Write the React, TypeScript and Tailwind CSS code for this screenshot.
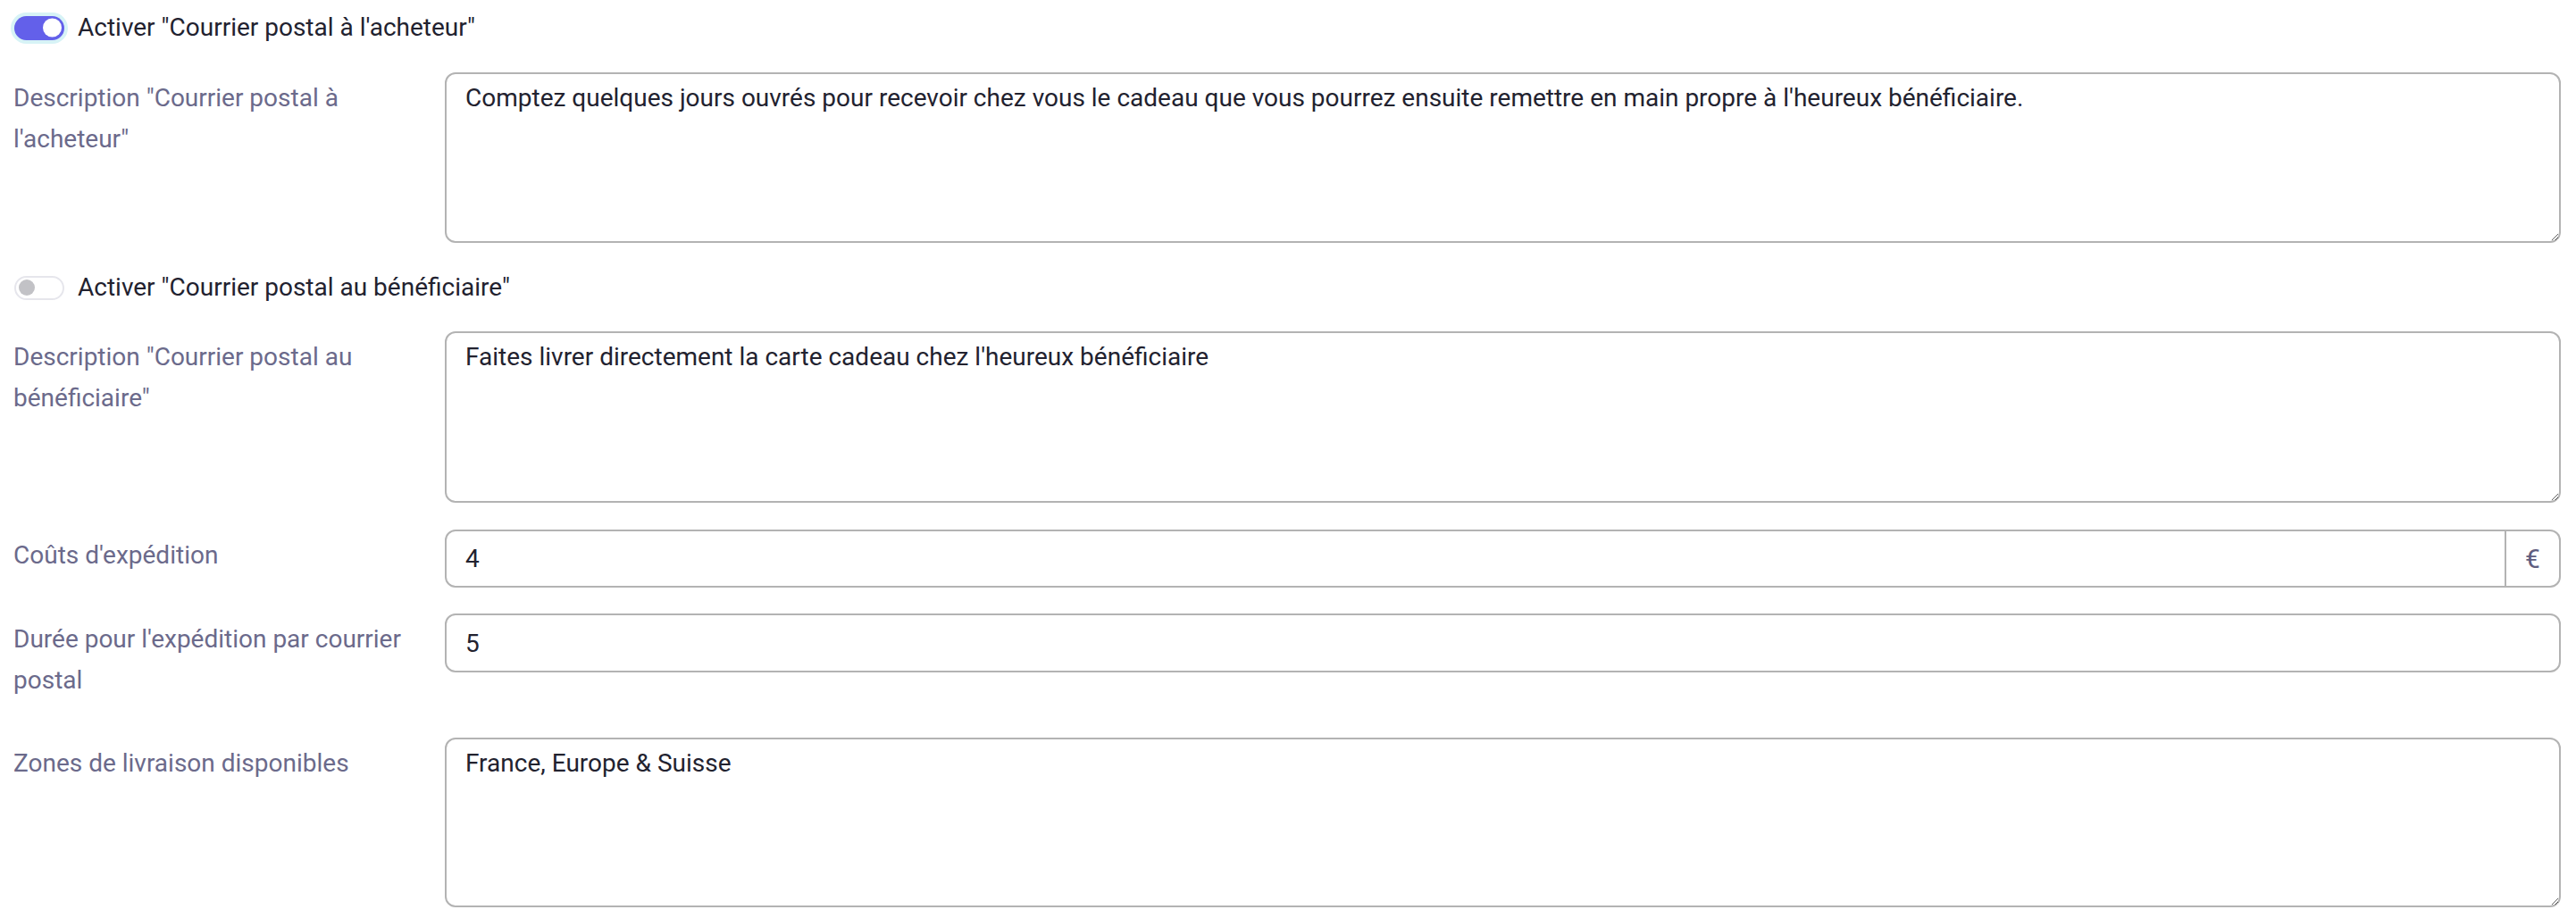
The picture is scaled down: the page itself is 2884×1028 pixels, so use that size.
import { useState } from "react";

const FONT = "font-['Roboto',_'Liberation_Sans',_sans-serif]";

const Toggle = ({ on, label, onChange }: { on: boolean; label: string; onChange: () => void }) => (
  <div className="flex h-[46px] items-center">
    <button
      type="button"
      onClick={onChange}
      className={`relative ml-[1px] h-[27px] w-[56px] shrink-0 rounded-full ${
        on
          ? "bg-[#6360ea] ring-[4px] ring-[#d7f3f6]"
          : "border-2 border-[#e6e6ec] bg-white"
      }`}
    >
      <span
        className={`absolute top-1/2 -translate-y-1/2 rounded-full ${
          on ? "right-[3px] h-[21px] w-[21px] bg-white" : "left-[3px] h-[18px] w-[18px] bg-[#c2c2c6]"
        }`}
      />
    </button>
    <span className="ml-[15px] text-[28px] leading-[46px] text-[#22222f]">{label}</span>
  </div>
);

const Row = ({ label, className, children }: { label: string; className: string; children: React.ReactNode }) => (
  <div className={`flex items-start ${className}`}>
    <div className="w-[483px] shrink-0 pr-[20px] pt-[6px] text-[28px] leading-[46px] text-[#6b6a8b]">
      {label}
    </div>
    <div className="min-w-0 flex-1">{children}</div>
  </div>
);

const Area = ({ value, h }: { value: string; h: string }) => (
  <textarea
    defaultValue={value}
    className={`block w-full rounded-[12px] border-2 border-[#b3b3b3] bg-white px-[21px] py-[8px] text-[28px] leading-[38px] text-[#22222f] outline-none ${h}`}
  />
);

export default function App() {
  const [buyer, setBuyer] = useState(true);
  const [recipient, setRecipient] = useState(false);

  return (
    <div className={`min-h-screen bg-white pl-[15px] pr-[17px] ${FONT}`}>
      <div className="pt-[8px]">
        <Toggle on={buyer} onChange={() => setBuyer(!buyer)} label={'Activer "Courrier postal à l\'acheteur"'} />
      </div>

      <Row label={'Description "Courrier postal à l\'acheteur"'} className="mt-[27px]">
        <Area
          h="h-[191px]"
          value="Comptez quelques jours ouvrés pour recevoir chez vous le cadeau que vous pourrez ensuite remettre en main propre à l'heureux bénéficiaire."
        />
      </Row>

      <div className="mt-[27px]">
        <Toggle
          on={recipient}
          onChange={() => setRecipient(!recipient)}
          label={'Activer "Courrier postal au bénéficiaire"'}
        />
      </div>

      <Row label={'Description "Courrier postal au bénéficiaire"'} className="mt-[26px]">
        <Area h="h-[192px]" value="Faites livrer directement la carte cadeau chez l'heureux bénéficiaire" />
      </Row>

      <Row label="Coûts d'expédition" className="mt-[30px]">
        <div className="flex h-[65px] w-full">
          <input
            defaultValue="4"
            className="h-full min-w-0 flex-1 rounded-l-[12px] border-2 border-[#b3b3b3] bg-white px-[21px] text-[28px] text-[#22222f] outline-none"
          />
          <span className="flex h-full w-[61px] shrink-0 items-center justify-center rounded-r-[12px] border-2 border-l-0 border-[#b3b3b3] text-[30px] text-[#5f5e80]">
            €
          </span>
        </div>
      </Row>

      <Row label="Durée pour l'expédition par courrier postal" className="mt-[29px]">
        <input
          defaultValue="5"
          className="block h-[66px] w-full rounded-[12px] border-2 border-[#b3b3b3] bg-white px-[21px] text-[28px] text-[#22222f] outline-none"
        />
      </Row>

      <Row label="Zones de livraison disponibles" className="mt-[41px]">
        <Area h="h-[190px]" value="France, Europe & Suisse" />
      </Row>
    </div>
  );
}
